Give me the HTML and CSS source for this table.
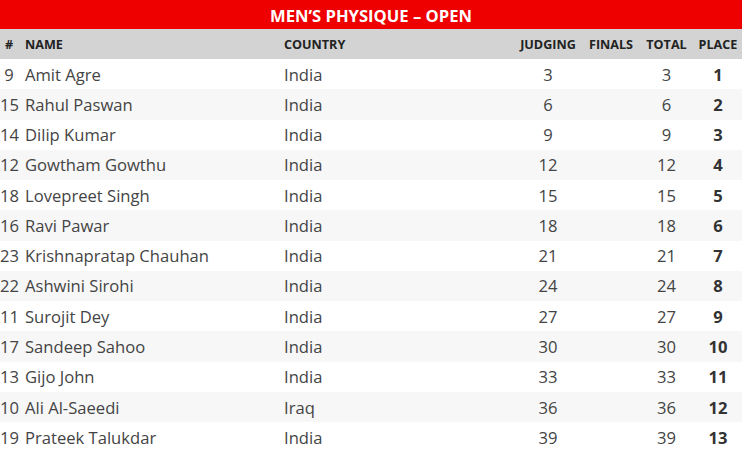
FILE: index.html
```html
<!DOCTYPE html>
<html>
<head>
<meta charset="utf-8">
<link rel="stylesheet" href="styles.css">
</head>
<body>
<div class="results">
  <div class="title">MEN’S PHYSIQUE – OPEN</div>
  <table class="tbl">
    <colgroup>
      <col class="c-num"><col class="c-name"><col class="c-country"><col class="c-judging"><col class="c-finals"><col class="c-total"><col class="c-place">
    </colgroup>
    <thead>
      <tr><th class="num">#</th><th class="left">NAME</th><th class="left">COUNTRY</th><th>JUDGING</th><th>FINALS</th><th>TOTAL</th><th>PLACE</th></tr>
    </thead>
    <tbody>
      <tr><td class="num">9</td><td class="left">Amit Agre</td><td class="left">India</td><td>3</td><td></td><td>3</td><td class="place">1</td></tr>
      <tr><td class="num">15</td><td class="left">Rahul Paswan</td><td class="left">India</td><td>6</td><td></td><td>6</td><td class="place">2</td></tr>
      <tr><td class="num">14</td><td class="left">Dilip Kumar</td><td class="left">India</td><td>9</td><td></td><td>9</td><td class="place">3</td></tr>
      <tr><td class="num">12</td><td class="left">Gowtham Gowthu</td><td class="left">India</td><td>12</td><td></td><td>12</td><td class="place">4</td></tr>
      <tr><td class="num">18</td><td class="left">Lovepreet Singh</td><td class="left">India</td><td>15</td><td></td><td>15</td><td class="place">5</td></tr>
      <tr><td class="num">16</td><td class="left">Ravi Pawar</td><td class="left">India</td><td>18</td><td></td><td>18</td><td class="place">6</td></tr>
      <tr><td class="num">23</td><td class="left">Krishnapratap Chauhan</td><td class="left">India</td><td>21</td><td></td><td>21</td><td class="place">7</td></tr>
      <tr><td class="num">22</td><td class="left">Ashwini Sirohi</td><td class="left">India</td><td>24</td><td></td><td>24</td><td class="place">8</td></tr>
      <tr><td class="num">11</td><td class="left">Surojit Dey</td><td class="left">India</td><td>27</td><td></td><td>27</td><td class="place">9</td></tr>
      <tr><td class="num">17</td><td class="left">Sandeep Sahoo</td><td class="left">India</td><td>30</td><td></td><td>30</td><td class="place">10</td></tr>
      <tr><td class="num">13</td><td class="left">Gijo John</td><td class="left">India</td><td>33</td><td></td><td>33</td><td class="place">11</td></tr>
      <tr><td class="num">10</td><td class="left">Ali Al-Saeedi</td><td class="left">Iraq</td><td>36</td><td></td><td>36</td><td class="place">12</td></tr>
      <tr><td class="num">19</td><td class="left">Prateek Talukdar</td><td class="left">India</td><td>39</td><td></td><td>39</td><td class="place">13</td></tr>
    </tbody>
  </table>
</div>
</body>
</html>
```

FILE: styles.css
```css
html, body {
  margin: 0;
  padding: 0;
  background: #ffffff;
}
body {
  font-family: "Open Sans", "DejaVu Sans", sans-serif;
}
.results {
  width: 742px;
}
.title {
  height: 29px;
  background: #ee0000;
  color: #ffffff;
  font-weight: 700;
  font-size: 16.6px;
  line-height: 31px;
  text-align: center;
}
.tbl {
  width: 742px;
  border-collapse: collapse;
  table-layout: fixed;
}
.c-num { width: 18px; }
.c-name { width: 264px; }
.c-country { width: 231px; }
.c-judging { width: 70px; }
.c-finals { width: 56px; }
.c-total { width: 55px; }
.c-place { width: 48px; }
.tbl th {
  height: 30px;
  padding: 0;
  background: #d3d3d3;
  color: #222222;
  font-size: 12.6px;
  font-weight: 700;
  text-align: center;
  white-space: nowrap;
}
.tbl td {
  height: 30.27px;
  padding: 0;
  color: #444444;
  font-size: 16.6px;
  text-align: center;
  white-space: nowrap;
}
.tbl tbody tr:nth-child(even) td {
  background: #f7f7f7;
}
.tbl .left {
  text-align: left;
  padding-left: 7px;
}
.tbl td.left + td.left, .tbl th.left + th.left { padding-left: 2px; }
.tbl .num {
  text-align: center;
  overflow: visible;
}
.tbl .place {
  font-weight: 700;
  color: #333333;
}
```
